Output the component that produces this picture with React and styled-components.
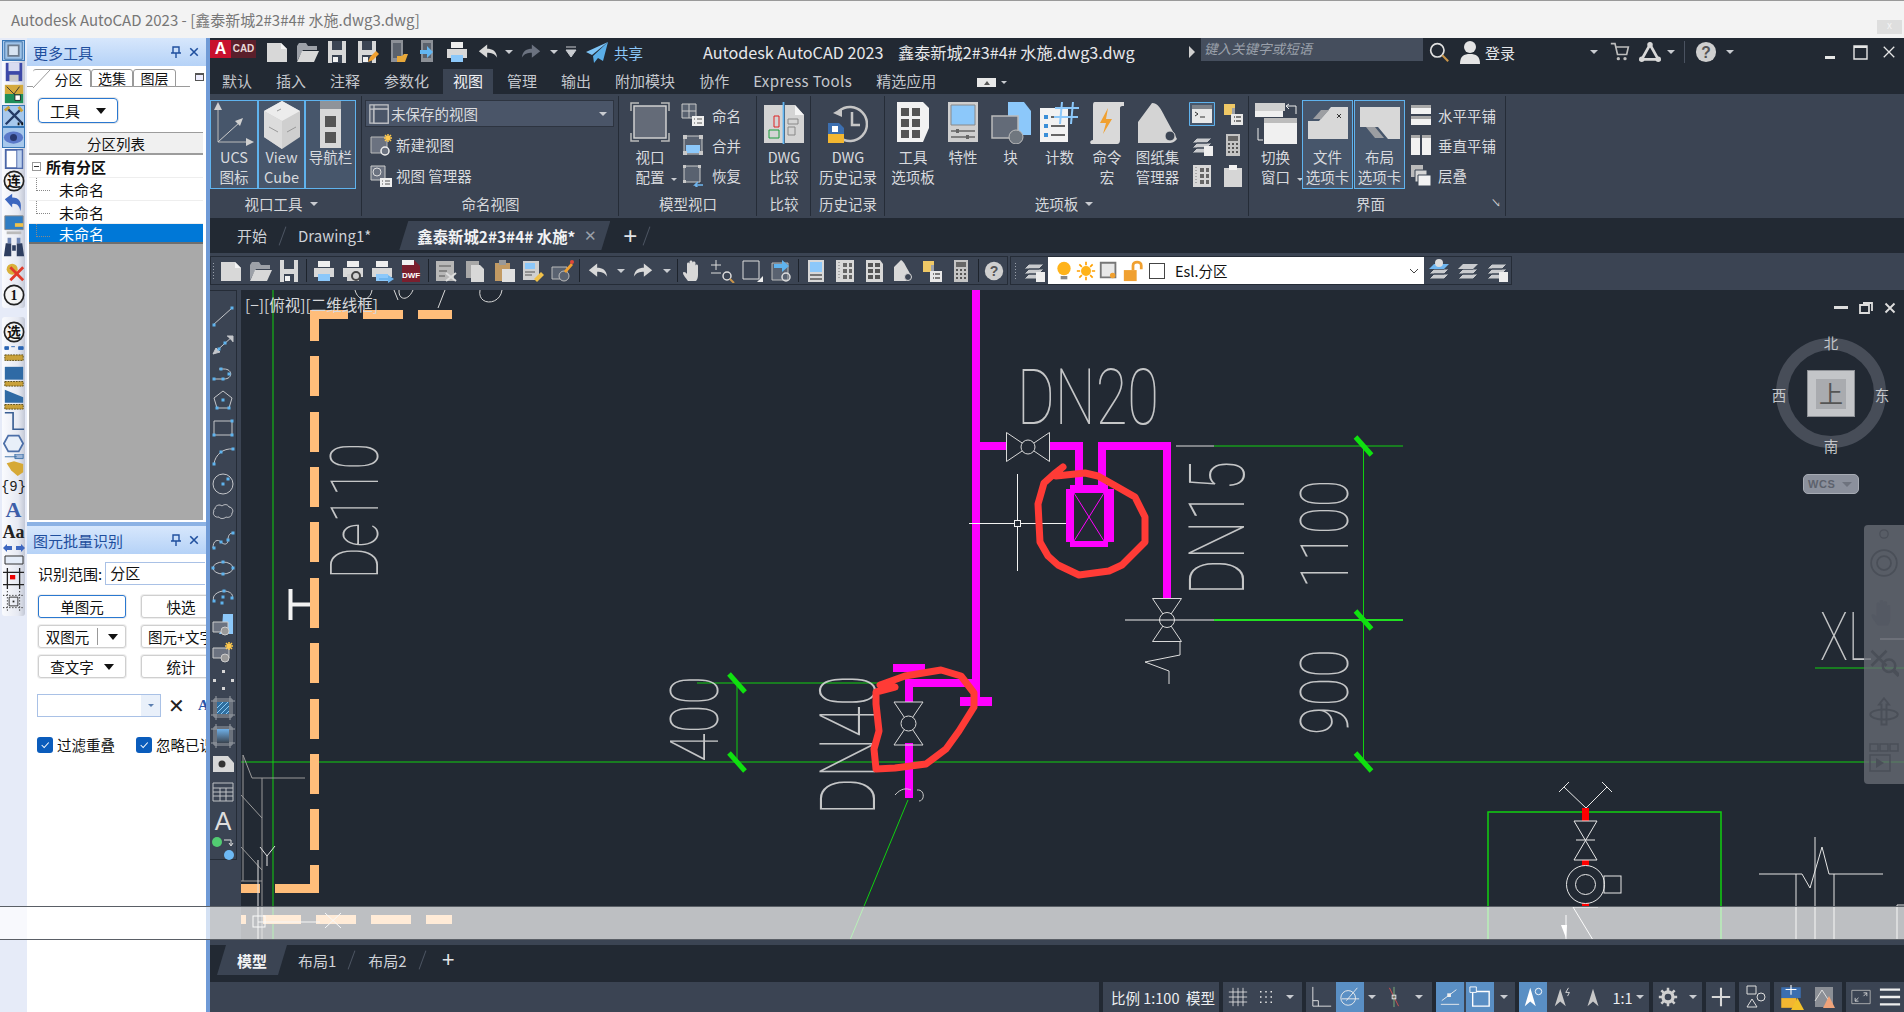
import React from "react";
import styled, { createGlobalStyle } from "styled-components";

const GlobalStyle = createGlobalStyle`
	html, body {
		margin: 0;
		padding: 0;
		overflow: hidden;
		background: #fff;
	}
	* {
		box-sizing: border-box;
	}
	body {
		font-family: "Noto Sans CJK SC", "Liberation Sans", sans-serif;
	}
`;

const dark = "#222933";
const ribbon = "#3b4453";
const fg = "#d9dbdf";
const grey = "#d8d8d8";
const sky = "#8cc8fa";

const Page = styled.div`
	position: relative;
	width: 1904px;
	height: 1012px;
	display: flex;
	flex-direction: column;
	overflow: hidden;
`;

const TitleBar = styled.div`
	height: 38px;
	flex: none;
	display: flex;
	align-items: center;
	background: #f3f3f3;
	border-top: 1px solid #999;
	padding-left: 11px;
	color: #777;
	font-size: 15px;
`;

const GhostClose = styled.div`
	margin-left: auto;
	margin-right: 2px;
	align-self: flex-end;
	width: 25px;
	height: 14px;
	margin-bottom: 4px;
	background: #dedede;
	color: #f4f4f4;
	font-size: 10px;
	line-height: 10px;
	text-align: center;
`;

const Body = styled.div`
	flex: 1;
	display: flex;
	min-height: 0;
`;

/* ---------- left tool strip ---------- */

const Strip = styled.div`
	width: 27px;
	flex: none;
	background: #e6ebf8;
	padding: 2px 2px 0 2px;
	display: flex;
	flex-direction: column;
	gap: 9px;
`;

const StripGroup = styled.div`
	display: flex;
	flex-direction: column;
	align-items: center;
	background: linear-gradient(90deg, #fafbfe, #e6e9f2 70%, #c3c8d6);
	border-radius: 3px;
	padding: ${(p) => p.$pad || "0"};
`;

const StripTool = styled.div`
	height: ${(p) => p.$h || 22}px;
	width: 23px;
	display: flex;
	align-items: center;
	justify-content: center;
	${(p) => p.$on && "background: #a7c8ec; outline: 1px solid #3a79b8; outline-offset: -1px;"}
`;

/* ---------- dockable panels ---------- */

const Docks = styled.div`
	width: 179px;
	flex: none;
	display: flex;
	flex-direction: column;
	background: #fff;
`;

const DockTitle = styled.div`
	height: 28px;
	flex: none;
	display: flex;
	align-items: center;
	padding: 0 7px 0 6px;
	background: linear-gradient(180deg, #d7e7fc, #b5d2f7);
	color: #1f4f9e;
	font-size: 15px;
`;

const DockButtons = styled.div`
	margin-left: auto;
	display: flex;
	gap: 7px;
	align-items: center;
`;

const TreePanel = styled.div`
	height: 484px;
	flex: none;
	display: flex;
	flex-direction: column;
`;

const TabStrip = styled.div`
	height: 21px;
	flex: none;
	display: flex;
	align-items: flex-end;
	padding-left: 6px;
	border-bottom: 1px solid #9a9a9a;
	position: relative;
	margin-right: 16px;
`;

const PaneTab = styled.div`
	height: 18px;
	width: ${(p) => p.$w}px;
	margin-bottom: -1px;
	padding-left: ${(p) => p.$pl || 0}px;
	display: flex;
	align-items: center;
	justify-content: center;
	font-size: 14px;
	line-height: 18px;
	color: #111;
	background: #fff;
	border: 1px solid #9a9a9a;
	border-left-color: #9a9a9a;
	border-radius: 3px 3px 0 0;
	${(p) => p.$on && "border: none; border-right: 1px solid #9a9a9a; border-top: 1px solid #9a9a9a; position: relative;"}
`;

const TabSlant = styled.svg`
	position: absolute;
	left: 0;
	top: 0;
	width: 18px;
	height: 18px;
`;

const Restore = styled.div`
	position: absolute;
	right: -14px;
	top: 7px;
	width: 9px;
	height: 8px;
	border: 1px solid #555;
	border-top-width: 2px;
	background: #eef;
`;

const DropButton = styled.div`
	margin: 11px 0 0 11px;
	width: 80px;
	height: 25px;
	flex: none;
	border: 1px solid #2a78d0;
	border-radius: 4px;
	display: flex;
	align-items: center;
	justify-content: center;
	gap: 16px;
	font-size: 15px;
	color: #111;
	box-shadow: 0 0 0 1px #e4e4e4;
`;

const BlackCaret = styled.span`
	display: inline-block;
	width: 0;
	height: 0;
	border-left: 5px solid transparent;
	border-right: 5px solid transparent;
	border-top: 6px solid #111;
`;

const TreeFrame = styled.div`
	flex: 1;
	margin: 9px 3px 0 2px;
	display: flex;
	flex-direction: column;
	border-bottom: 2px solid #fff;
	min-height: 0;
`;

const TreeHead = styled.div`
	height: 23px;
	flex: none;
	display: flex;
	align-items: center;
	justify-content: center;
	font-size: 14.5px;
	color: #111;
	background: #f0f0f0;
	border: 1px solid #9c9c9c;
	border-width: 1px 0 2px 0;
`;

const TreeRow = styled.div`
	height: ${(p) => p.$h || 23}px;
	flex: none;
	display: flex;
	align-items: center;
	padding-left: ${(p) => (p.$root ? 3 : 30)}px;
	gap: 5px;
	font-size: 15px;
	font-weight: ${(p) => (p.$root ? 700 : 400)};
	color: ${(p) => (p.$sel ? "#fff" : "#111")};
	background: ${(p) => (p.$sel ? "#0078d7" : "#fff")};
	border-bottom: ${(p) => (p.$sel ? "none" : "1px solid #eee")};
	position: relative;
	&::before {
		content: "";
		display: ${(p) => (p.$root ? "none" : "block")};
		position: absolute;
		left: 7px;
		top: 0;
		width: 13px;
		height: 12px;
		border-left: 1px dotted #888;
		border-bottom: 1px dotted #888;
	}
`;

const MinusBox = styled.span`
	width: 9px;
	height: 9px;
	border: 1px solid #999;
	display: inline-flex;
	align-items: center;
	justify-content: center;
	background: #fff;
	&::after {
		content: "";
		width: 5px;
		height: 1px;
		background: #333;
	}
`;

const TreeEmpty = styled.div`
	flex: 1;
	background: #a9a9a9;
	border-top: 2px solid #6e6e6e;
`;

const DockGap = styled.div`
	height: 4px;
	flex: none;
	background: #8cb2e4;
`;

const FormPanel = styled.div`
	flex: 1;
	display: flex;
	flex-direction: column;
	overflow: hidden;
`;

const FieldRow = styled.div`
	display: flex;
	align-items: center;
	margin: 8px 0 0 11px;
	font-size: 15px;
	color: #111;
`;

const FieldInput = styled.div`
	margin-left: 3px;
	width: 100px;
	height: 23px;
	flex: none;
	border: 1px solid #a9c1e6;
	border-right: none;
	padding-left: 4px;
	line-height: 20px;
	font-size: 15px;
`;

const ButtonGrid = styled.div`
	display: grid;
	grid-template-columns: 88px 80px;
	grid-auto-rows: 23px;
	column-gap: 15px;
	row-gap: 7px;
	margin: 10px 0 0 11px;
`;

const FormButton = styled.div`
	border: 1px solid ${(p) => (p.$on ? "#2a78d0" : "#cfcfcf")};
	border-radius: 3px;
	display: flex;
	align-items: center;
	justify-content: center;
	gap: 10px;
	font-size: 14.5px;
	color: #111;
	background: #fff;
	box-shadow: 0 0 0 1px #eee;
	white-space: nowrap;
`;

const SplitLine = styled.span`
	width: 1px;
	height: 17px;
	background: #999;
	margin-left: -2px;
`;

const ComboRow = styled.div`
	display: flex;
	align-items: center;
	margin: 16px 0 0 10px;
`;

const SearchCombo = styled.div`
	width: 124px;
	height: 23px;
	flex: none;
	border: 1px solid #a9c1e6;
	display: flex;
	justify-content: flex-end;
`;

const ComboArrow = styled.div`
	width: 19px;
	background: #e9f0fa;
	display: flex;
	align-items: center;
	justify-content: center;
	&::after {
		content: "";
		border-left: 3px solid transparent;
		border-right: 3px solid transparent;
		border-top: 3px solid #5c7fb0;
	}
`;

const CloseMark = styled.span`
	margin-left: 7px;
	font-size: 20px;
	line-height: 20px;
	color: #222;
	font-family: "Liberation Sans", sans-serif;
`;

const BlueLetter = styled.span`
	margin-left: 13px;
	font-family: "Liberation Serif", serif;
	font-weight: 700;
	font-size: 15px;
	color: #2c55a8;
`;

const CheckRow = styled.div`
	display: flex;
	margin: 17px 0 0 10px;
	gap: 21px;
	white-space: nowrap;
`;

const CheckItem = styled.div`
	display: flex;
	align-items: center;
	gap: 4px;
	font-size: 14.5px;
	color: #111;
`;

const CheckBox = styled.span`
	width: 16px;
	height: 16px;
	border-radius: 3px;
	background: #0a5cbc;
	display: inline-flex;
	align-items: center;
	justify-content: center;
`;

const BlueSplit = styled.div`
	width: 4px;
	flex: none;
	background: #6f9ad6;
`;

/* ---------- AutoCAD window ---------- */

const Cad = styled.div`
	flex: 1;
	min-width: 0;
	display: flex;
	flex-direction: column;
	background: ${dark};
	color: ${fg};
`;

const QuickBar = styled.div`
	height: 28px;
	flex: none;
	display: flex;
	align-items: center;
	font-size: 14px;
`;

const Logo = styled.div`
	width: 46px;
	height: 18px;
	flex: none;
	margin-right: 6px;
	display: flex;
	align-self: flex-start;
	margin-top: 2px;
	font-family: "Liberation Sans", sans-serif;
	font-weight: 700;
`;

const LogoA = styled.span`
	width: 21px;
	background: #c8102e;
	color: #fff;
	font-size: 16px;
	line-height: 18px;
	text-align: center;
`;

const LogoCad = styled.span`
	flex: 1;
	background: #5a1f2b;
	color: #e8d8d8;
	font-size: 10px;
	line-height: 18px;
	text-align: center;
`;

const Slot = styled.div`
	width: ${(p) => p.$w || 30}px;
	height: 26px;
	flex: none;
	display: flex;
	align-items: center;
	justify-content: center;
`;

const ShareText = styled.span`
	color: ${sky};
	margin-left: 1px;
	font-size: 14.5px;
`;

const WindowTitle = styled.div`
	margin-left: 60px;
	font-size: 16.2px;
	white-space: pre;
	color: #e6e7ea;
	width: 480px;
	flex: none;
`;

const SearchBox = styled.div`
	width: 222px;
	height: 23px;
	align-self: flex-start;
	flex: none;
	background: #454e5d;
	color: #9aa0aa;
	font-style: italic;
	font-size: 13.5px;
	padding-left: 3px;
	line-height: 21px;
`;

const Login = styled.div`
	width: 99px;
	flex: none;
	font-size: 15px;
	color: #e4e6e9;
`;

const Upward = styled.div`
	width: 1px;
	height: 22px;
	flex: none;
	background: #4a5260;
	margin: 0 6px;
`;

const MinBar = styled.div`
	width: 10px;
	height: 3px;
	background: #e6e6e6;
	margin: 10px 0 0 76px;
`;

const TabsBar = styled.div`
	height: 28px;
	flex: none;
	display: flex;
	align-items: flex-end;
`;

const RibbonTab = styled.div`
	height: 25px;
	padding: 0 ${(p) => (p.$on ? 10 : 12)}px;
	margin: 0 ${(p) => (p.$on ? 2 : 0)}px;
	font-size: 15px;
	line-height: 23px;
	letter-spacing: ${(p) => (p.$wide ? "0.4px" : "0")};
	color: ${(p) => (p.$on ? "#f0f1f3" : "#c4c7cd")};
	background: ${(p) => (p.$on ? ribbon : "transparent")};
	white-space: nowrap;
`;

const MiniCollapse = styled.div`
	margin: 0 0 7px 29px;
	width: 19px;
	height: 9px;
	background: #e8e8e8;
	display: flex;
	align-items: center;
	justify-content: center;
	&::after {
		content: "";
		border-left: 3px solid transparent;
		border-right: 3px solid transparent;
		border-bottom: 4px solid #555;
	}
`;

const SmallCaret = styled.span`
	display: inline-block;
	width: 0;
	height: 0;
	margin-left: ${(p) => p.$ml || 0}px;
	margin-bottom: ${(p) => p.$mb || 0}px;
	border-left: ${(p) => p.$s || 4}px solid transparent;
	border-right: ${(p) => p.$s || 4}px solid transparent;
	border-top: ${(p) => p.$s || 4}px solid ${(p) => p.$c || "#c9ccd1"};
`;

const Ribbon = styled.div`
	height: 124px;
	flex: none;
	display: flex;
	background: ${ribbon};
`;

const RibbonPanel = styled.div`
	width: ${(p) => p.$w}px;
	flex: none;
	display: flex;
	flex-direction: column;
	position: relative;
	&::after {
		content: "";
		position: absolute;
		right: 0;
		top: 2px;
		bottom: 2px;
		width: 1px;
		background: #252c37;
	}
`;

const PanelBody = styled.div`
	height: 96px;
	flex: none;
	padding-top: 6px;
	display: flex;
`;

const PanelLabel = styled.div`
	flex: 1;
	display: flex;
	align-items: center;
	justify-content: center;
	gap: 7px;
	font-size: 14.5px;
	color: #d6d8dc;
	position: relative;
	padding-bottom: 1px;
	padding-right: ${(p) => p.$pr || 0}px;
`;

const Expander = styled.span`
	position: absolute;
	right: 5px;
	top: 8px;
	color: #ccc;
	font-size: 10px;
	line-height: 10px;
`;

const TallButton = styled.div`
	width: ${(p) => p.$w}px;
	height: 89px;
	flex: none;
	display: flex;
	flex-direction: column;
	align-items: center;
	font-size: 14.5px;
	line-height: 20px;
	color: ${fg};
	text-align: center;
	position: relative;
	margin-right: ${(p) => p.$mr || 0}px;
	${(p) => p.$on && "background: #47566b; border: 1px solid #5fb3ee;"}
`;

const TallIcon = styled.div`
	height: 47px;
	width: 100%;
	flex: none;
	display: flex;
	justify-content: center;
	align-items: flex-start;
	padding-top: ${(p) => p.$pt ?? 2}px;
	margin-top: ${(p) => (p.$on ? -1 : 0)}px;
`;

const CaretPin = styled.span`
	position: absolute;
	right: ${(p) => p.$r ?? 4}px;
	top: 65px;
`;

const RowsColumn = styled.div`
	display: flex;
	flex-direction: column;
	margin-left: ${(p) => p.$ml || 0}px;
	padding-top: ${(p) => p.$pt || 0}px;
`;

const SmallRow = styled.div`
	height: 31px;
	display: flex;
	align-items: center;
	gap: ${(p) => p.$gap || 7}px;
	font-size: 14.5px;
	color: ${fg};
	white-space: nowrap;
`;

const ViewDrop = styled.div`
	width: 249px;
	height: 27px;
	flex: none;
	margin-left: 3px;
	display: flex;
	align-items: center;
	gap: 2px;
	padding: 0 6px 0 3px;
	background: #4a5568;
	border: 1px solid #2d3440;
	font-size: 14.5px;
	color: ${fg};
`;

const DropEnd = styled.span`
	margin-left: auto;
	display: flex;
`;

const MiniGrid = styled.div`
	display: grid;
	grid-template-columns: 36px 26px;
	grid-auto-rows: 31px;
	align-items: center;
	justify-items: center;
	margin-top: -2px;
`;

const DocTabs = styled.div`
	height: 35px;
	flex: none;
	display: flex;
	align-items: center;
	font-size: 15px;
	color: #cfd2d7;
	padding-left: 27px;
`;

const DocSlash = styled.span`
	width: 1px;
	height: 20px;
	background: #4d5563;
	transform: rotate(20deg);
	margin: 0 ${(p) => p.$m || 15}px;
	flex: none;
`;

const DocActive = styled.div`
	width: 211px;
	height: 29px;
	flex: none;
	margin-left: 28px;
	margin-right: 13px;
	background: ${ribbon};
	clip-path: polygon(9px 0, 100% 0, calc(100% - 9px) 100%, 0 100%);
	display: flex;
	align-items: center;
	padding-left: 18px;
	font-weight: 700;
	font-size: 15.4px;
	color: #f1f2f4;
	white-space: nowrap;
`;

const TabClose = styled.span`
	margin-left: 9px;
	font-weight: 400;
	font-size: 15px;
	color: #9aa0a9;
	font-family: "Liberation Sans", sans-serif;
`;

const PlusMark = styled.span`
	font-family: "Liberation Sans", sans-serif;
	font-size: ${(p) => p.$s || 24}px;
	line-height: 20px;
	color: #e2e4e7;
`;

const ToolRow = styled.div`
	height: 37px;
	flex: none;
	display: flex;
	align-items: flex-start;
	padding-top: 3px;
	gap: 2px;
	background: ${ribbon};
`;

const ToolBox = styled.div`
	height: 29px;
	flex: none;
	display: flex;
	align-items: center;
	border: 1px solid #252c37;
`;

const Grip = styled.span`
	width: 3px;
	height: 18px;
	flex: none;
	margin: 0 ${(p) => p.$m ?? 3}px;
	background-image: radial-gradient(#9aa0aa 1px, transparent 1px);
	background-size: 3px 3px;
`;

const ToolSep = styled.span`
	width: 1px;
	height: 23px;
	flex: none;
	background: #1d232c;
	margin: 0 ${(p) => p.$m ?? 2.5}px;
`;

const LayerCombo = styled.div`
	width: 376px;
	height: 27px;
	flex: none;
	background: #fff;
	display: flex;
	align-items: center;
	padding-left: 6px;
	gap: 2px;
	color: #111;
	font-size: 14.5px;
`;

const LayerSwatch = styled.span`
	width: 16px;
	height: 16px;
	margin: 0 8px 0 3px;
	background: #fff;
	border: 1px solid #444;
`;

const Chevron = styled.span`
	margin-left: auto;
	margin-right: 5px;
	display: flex;
`;

const Workspace = styled.div`
	height: 650px;
	flex: none;
	display: flex;
`;

const LeftRail = styled.div`
	width: 31px;
	flex: none;
	background: ${ribbon};
`;

const DrawBar = styled.div`
	width: 27px;
	height: 570px;
	border: 1px solid #252c37;
	border-left: none;
	display: flex;
	flex-direction: column;
	align-items: center;
	padding-top: 11px;
`;

const DrawTool = styled.div`
	height: 28px;
	flex: none;
	display: flex;
	align-items: center;
	justify-content: center;
`;

const Canvas = styled.div`
	flex: 1;
	position: relative;
	overflow: hidden;
	background: ${dark};
`;

const Drawing = styled.svg`
	display: block;
	width: 1663px;
	height: 650px;
`;

const ViewLabel = styled.div`
	position: absolute;
	left: 4px;
	top: 3px;
	font-size: 15.5px;
	color: #d6d8db;
	white-space: nowrap;
`;

const ViewControls = styled.div`
	position: absolute;
	top: 12px;
	right: 8px;
	display: flex;
	gap: 11px;
	align-items: center;
`;

const Cube = styled.div`
	position: absolute;
	left: 1531px;
	top: 48px;
	width: 118px;
	height: 160px;
`;

const CubeRing = styled.div`
	position: absolute;
	left: 4px;
	top: 0;
	width: 110px;
	height: 110px;
	border: 12px solid #474d58;
	border-radius: 50%;
`;

const CubeFace = styled.div`
	position: absolute;
	left: 35px;
	top: 32px;
	width: 48px;
	height: 47px;
	background: #c3c5c8;
	border: 1px solid #8e9196;
	display: flex;
	align-items: center;
	justify-content: center;
`;

const CubeTop = styled.div`
	width: 30px;
	height: 30px;
	background: #a9abaf;
	color: #555;
	font-size: 24px;
	line-height: 28px;
	text-align: center;
`;

const Compass = styled.span`
	position: absolute;
	left: ${(p) => p.$x}px;
	top: ${(p) => p.$y}px;
	width: 16px;
	text-align: center;
	font-size: 14.5px;
	line-height: 16px;
	color: #c4c6ca;
`;

const WcsPill = styled.div`
	position: absolute;
	left: 31px;
	top: 136px;
	width: 56px;
	height: 20px;
	border-radius: 5px;
	background: #8b909c;
	border: 1px solid #a7abb4;
	display: flex;
	align-items: center;
	gap: 7px;
	padding-left: 4px;
	color: #5d626d;
	font-family: "Liberation Sans", sans-serif;
	font-size: 11px;
	font-weight: 700;
	letter-spacing: 0.6px;
`;

const NavBar = styled.div`
	position: absolute;
	right: 0;
	top: 235px;
	width: 40px;
	height: 259px;
	background: rgba(104, 108, 116, 0.78);
	border-radius: 4px 0 0 4px;
	display: flex;
	flex-direction: column;
	align-items: center;
	padding-top: 2px;
`;

const NavSlot = styled.div`
	height: ${(p) => p.$h}px;
	flex: none;
	display: flex;
	align-items: center;
	justify-content: center;
`;

const LightStrip = styled.div`
	height: 5px;
	flex: none;
	background: ${ribbon};
`;

const LayoutBar = styled.div`
	height: 37px;
	flex: none;
	display: flex;
	padding: 0 0 7px 7px;
	align-items: stretch;
	font-size: 15px;
	color: #cfd2d7;
`;

const LayoutActive = styled.div`
	width: 70px;
	flex: none;
	background: ${ribbon};
	clip-path: polygon(9px 0, 100% 0, calc(100% - 9px) 100%, 0 100%);
	display: flex;
	align-items: center;
	justify-content: center;
	font-weight: 700;
	color: #f1f2f4;
`;

const LayoutTab = styled.div`
	display: flex;
	align-items: center;
	margin-left: ${(p) => p.$ml}px;
	white-space: nowrap;
`;

const LayoutSlash = styled(DocSlash)`
	align-self: center;
`;

const StatusBar = styled.div`
	height: 30px;
	flex: none;
	display: flex;
	gap: 4px;
	font-size: 14.5px;
`;

const StatusGroup = styled.div`
	width: ${(p) => p.$w}px;
	flex: ${(p) => (p.$w ? "none" : "1")};
	background: ${ribbon};
	display: flex;
	align-items: center;
	padding-left: ${(p) => p.$pl || 0}px;
	white-space: nowrap;
	color: #eceef1;
`;

const StatusSlot = styled.div`
	width: ${(p) => p.$w || 28}px;
	height: 100%;
	flex: none;
	display: flex;
	align-items: center;
	justify-content: center;
	margin-right: ${(p) => p.$mr || 0}px;
	background: ${(p) => (p.$on ? "#5a8fc4" : "transparent")};
`;

const Band = styled.div`
	position: absolute;
	left: 0;
	right: 0;
	top: 906px;
	height: 34px;
	background: rgba(255, 255, 255, 0.7);
	border-top: 1px solid #5a5f66;
	border-bottom: 1px solid #5a5f66;
	pointer-events: none;
`;

/* ---------- small pictures ---------- */

const Svg = ({ s = 24, w, h, vb = "0 0 24 24", children }) => (
	<svg width={w || s} height={h || s} viewBox={vb} style={{ display: "block", flex: "none" }}>
		{children}
	</svg>
);

const Floppy = ({ pen }) => (
	<Svg>
		<path d="M3 1h18v22H3z" fill={grey} />
		<path d="M7 1h10v9H7zM7 15h10v8H7z" fill={ribbon} />
		<path d="M8 17h5v5H8z" fill="#f2f2f2" />
		{pen && <path d="M13 22l2-5 6-6 3 3-6 6z" fill="#f0a030" />}
	</Svg>
);

const NewDoc = () => (
	<Svg>
		<path d="M2 3h14l6 6v13H2z" fill={grey} />
		<path d="M16 3l6 6h-6z" fill="#f4f4f4" />
	</Svg>
);

const OpenDoc = () => (
	<Svg>
		<path d="M2 21V6l2-3h7l2 3h9v4H8z" fill="#9da1a8" />
		<path d="M7 11h17l-5 11H2z" fill={grey} />
	</Svg>
);

const Printer = ({ arrow, glass }) => (
	<Svg>
		<path d="M6 2h12v6H6z" fill="#eee" />
		<path d="M2 9h20v9H2z" fill={grey} />
		<path d="M6 15h12v7H6z" fill={glass ? "#cfcfcf" : sky} />
		{arrow && <path d="M9 19h9v-3l6 4-6 4v-3H9z" fill="#6fb6f0" />}
		{glass && <circle cx="15" cy="17" r="4" fill="none" stroke="#444" strokeWidth="2" />}
	</Svg>
);

const Phone = ({ doc, share }) => (
	<Svg>
		<path d="M6 0h12v22H6z" fill="#8c9097" />
		<path d="M8 3h8v15H8z" fill="#5b626d" />
		{doc && <path d="M12 16h5l2-2h4l-3 8h-8z" fill="#e8a83a" />}
		{share && <path d="M5 10h7V6l6 6-6 6v-4H5z" fill="#63b6f2" />}
	</Svg>
);

const Undo = ({ c = grey }) => (
	<Svg w={24} h={20}>
		<path d="M1 11l10-8v5c6 0 11 2 12 11-3-5-7-6-12-6v6z" fill={c} />
	</Svg>
);

const Redo = ({ c = grey }) => (
	<Svg w={24} h={20}>
		<path d="M23 11L13 3v5C7 8 2 10 1 19c3-5 7-6 12-6v6z" fill={c} />
	</Svg>
);

const Send = () => (
	<Svg>
		<path d="M23 2L1 12l6 3z" fill="#7ec4f6" />
		<path d="M23 2L8 16l1 7 4-5 5 3z" fill="#5aaee8" />
	</Svg>
);

const Cross = ({ s = 16, c = "#fff", sw = 2 }) => (
	<Svg s={s} vb="0 0 16 16">
		<path d="M2 2l12 12M14 2L2 14" stroke={c} strokeWidth={sw} fill="none" />
	</Svg>
);

const Pin = ({ c = "#1f4f9e" }) => (
	<Svg s={12} vb="0 0 12 12">
		<path d="M3 1h6v6H3zM1 7h10M6 7v5" stroke={c} strokeWidth="1.4" fill="none" />
	</Svg>
);

const HandIcon = ({ c = grey, s = 24 }) => (
	<Svg s={s}>
		<path
			d="M7 22c-2-3-5-6-5-8 0-2 3-1 4 1V5c0-2 2.500-2 2.500 0v5V3c0-2 3-2 3 0v7V4c0-2 3-2 3 0v7-4c0-2 2.500-2 2.500 0v9c0 3-1 5-2 6z"
			fill={c}
		/>
	</Svg>
);

const PropsCard = () => (
	<Svg>
		<path d="M4 1h16v22H4z" fill={grey} />
		<path d="M6 3h12v10H6z" fill={sky} />
		<path d="M6 16h12M6 20h12" stroke="#555" strokeWidth="1.500" />
	</Svg>
);

const PaletteCard = ({ big }) => (
	<Svg>
		<path d="M4 1h14l3 4v18H4z" fill={big ? "#efefef" : grey} />
		<path d="M6 4h5v4H6zM13 4h5v4h-5zM6 10h5v4H6zM13 10h5v4h-5zM6 16h5v4H6zM13 16h5v4h-5z" fill="#555" />
	</Svg>
);

const DotGridCard = () => (
	<Svg>
		<path d="M3 1h18v22H3z" fill={grey} />
		<path d="M10 4h4v4h-4zM16 4h3v4h-3zM10 10h4v4h-4zM16 10h3v4h-3zM10 16h4v4h-4zM16 16h3v4h-3z" fill="#666" />
		<path d="M6 3v18" stroke="#777" strokeDasharray="1 2" />
	</Svg>
);

const SheetRoll = () => (
	<Svg>
		<path d="M3 22V8L10 1c3 1 6 9 10 15-1 4-4 6-6 6z" fill={grey} />
		<circle cx="17" cy="18" r="3.500" fill={ribbon} stroke={grey} />
	</Svg>
);

const LayerNotes = () => (
	<Svg>
		<path d="M3 2h11v11H3z" fill="#efc866" />
		<path d="M10 12h12v11H10z" fill="#e8e8e8" />
		<path d="M11 6h3v6h-3z" fill="#9da1a8" />
		<path d="M13 15h1M13 19h1M15 15h5M15 19h5" stroke="#555" strokeWidth="1.500" />
	</Svg>
);

const Calculator = () => (
	<Svg>
		<path d="M5 1h14v22H5z" fill="#c4c4c4" />
		<path d="M7 3h10v5H7z" fill="#666" />
		<path d="M7 10h2v2H7zM11 10h2v2h-2zM15 10h2v2h-2zM7 14h2v2H7zM11 14h2v2h-2zM15 14h2v2h-2zM7 18h2v2H7zM11 18h2v2h-2zM15 18h2v2h-2z" fill="#555" />
	</Svg>
);

const HelpDisc = ({ s = 20 }) => (
	<Svg s={s}>
		<circle cx="12" cy="12" r="11" fill="#cfcfcf" />
		<text x="12" y="18" textAnchor="middle" fontFamily="Liberation Sans" fontWeight="700" fontSize="17" fill="#555">
			?
		</text>
	</Svg>
);

const LayerStack = ({ top, badge, person }) => (
	<Svg>
		<path d="M2 20l5-5h15l-5 5zM2 15l5-5h15l-5 5zM2 10l5-5h15l-5 5z" fill="#c9cbce" stroke={ribbon} />
		{top && <path d="M2 10l5-5h15l-5 5z" fill={top} />}
		{person && <circle cx="12" cy="4" r="4" fill="#ddd" />}
		{badge && <path d="M14 13h9v10h-9z" fill="#eee" />}
	</Svg>
);

const Bulb = () => (
	<Svg s={20}>
		<circle cx="12" cy="9" r="8" fill="#ffb31a" />
		<path d="M8 18h8v4H8z" fill="#888" />
	</Svg>
);

const Sun = () => (
	<Svg s={20}>
		<circle cx="12" cy="12" r="6" fill="#ffb31a" />
		<path d="M12 1v4M12 19v4M1 12h4M19 12h4M4 4l3 3M17 17l3 3M20 4l-3 3M7 17l-3 3" stroke="#ffa000" strokeWidth="2" />
	</Svg>
);

const FreezeFrame = () => (
	<Svg s={22}>
		<path d="M3 3h16v16H3z" fill="#e8e8e8" stroke="#777" strokeWidth="2" />
		<circle cx="16" cy="17" r="3" fill="#f0a030" />
	</Svg>
);

const Padlock = () => (
	<Svg s={22}>
		<path d="M2 11h14v12H2z" fill="#f0a030" />
		<path d="M12 11V6c0-5 9-5 9 0v4" fill="none" stroke="#f0a030" strokeWidth="3" />
	</Svg>
);

const dots = (pts) => pts.map(([x, y], i) => <rect key={i} x={x - 1.5} y={y - 1.5} width="3" height="3" fill="#5fb3ee" />);

const draw = {
	line: <path d="M2 21L21 4" stroke="#c4c6ca" fill="none" />,
	xline: <path d="M2 22L22 4M16 4h6v6M2 22l7-2-4-4z" stroke="#c4c6ca" fill="#c4c6ca" />,
	pline: <path d="M2 19h11c9 0 9-10 0-10H8" stroke="#c4c6ca" fill="none" />,
	polygon: <path d="M12 3l9 7-3 10H6L3 10z" stroke="#c4c6ca" fill="none" />,
	rect: <path d="M3 5h18v14H3z" stroke="#c4c6ca" fill="none" />,
	arc: <path d="M3 20C4 11 12 4 22 5" stroke="#c4c6ca" fill="none" />,
	circle: <circle cx="12" cy="12" r="10" stroke="#c4c6ca" fill="none" />,
	cloud: (
		<path
			d="M4 9c0-4 5-5 7-3 2-2 6-2 7 1 3 0 5 4 3 6 0 4-4 5-6 4-2 2-6 2-7 0-4 1-7-3-5-6-1-1 0-2 1-2z"
			stroke="#c4c6ca"
			fill="none"
		/>
	),
	spline: <path d="M2 20c0-8 5-9 8-6s7 3 7-2 2-7 5-7" stroke="#c4c6ca" fill="none" />,
	ellipse: <ellipse cx="12" cy="12" rx="10" ry="6" stroke="#c4c6ca" fill="none" />,
	earc: <path d="M3 17C0 11 8 7 13 7s10 3 8 7" stroke="#c4c6ca" fill="none" />,
	insert: (
		<>
			<path d="M12 2h10v20H8l3-6z" fill={sky} />
			<path d="M2 10h15v10H2z" fill="#6b7280" stroke="#ccc" />
			<circle cx="14" cy="19" r="4" fill="#999" stroke="#ccc" />
		</>
	),
	block: (
		<>
			<path d="M2 8h16v10H2z" fill="#6b7280" stroke="#ccc" />
			<circle cx="14" cy="18" r="4" fill="#999" stroke="#ccc" />
			<path d="M18 2v8M14 6h8M15 3l6 6M21 3l-6 6" stroke="#ffc94d" strokeWidth="1.500" />
		</>
	),
	point: <path d="M11 2h3v3h-3zM2 11h3v3H2zM20 11h3v3h-3zM11 19h3v3h-3z" fill="#d6d6d6" />,
	hatch: (
		<>
			<path d="M3 3h18v18H3zM0 5h24M0 19h24M5 0v24M19 0v24" stroke="#9ca0a7" fill="none" />
			<path d="M6 6h12v12H6z" fill="#2f6e9f" />
			<path d="M6 12l6-6M6 17l11-11M10 18l8-8M15 18l3-3" stroke="#8ccaf5" />
		</>
	),
	gradient: (
		<>
			<path d="M3 3h18v18H3zM0 5h24M0 19h24M5 0v24M19 0v24" stroke="#9ca0a7" fill="none" />
			<path d="M6 5h12v14H6z" fill="url(#gradTool)" />
		</>
	),
	region: (
		<>
			<path d="M2 4h15l6 7v9H2z" fill="#d8d8d8" />
			<circle cx="11" cy="12" r="3.500" fill="#333" />
		</>
	),
	table: <path d="M2 3h20v18H2zM2 8h20M2 12h20M2 16h20M9 8v13M15 8v13" stroke="#bfc1c5" fill="none" />,
	mtext: (
		<text x="12" y="22" textAnchor="middle" fontFamily="Liberation Sans" fontSize="25" fill="#dedede">
			A
		</text>
	),
	add: (
		<>
			<circle cx="6" cy="6" r="5" fill="#52cc72" />
			<circle cx="18" cy="19" r="5" fill="#6db9f4" />
			<path d="M13 4h7v5M18 7l2 3 2-3" stroke="#ddd" fill="none" />
		</>
	),
};

const drawList = [
	["line", [[3, 21], [21, 4]]],
	["xline", [[8, 17], [14, 11]]],
	["pline", [[3, 19], [12, 19], [10, 9], [18, 14]]],
	["polygon", [[12, 12], [6, 20], [18, 20]]],
	["rect", [[21, 19], [3, 19], [21, 5]]],
	["arc", [[3, 20], [10, 8], [22, 5]]],
	["circle", [[12, 12], [17, 7]]],
	["cloud", []],
	["spline", [[3, 20], [10, 14], [17, 12], [22, 5]]],
	["ellipse", [[2, 12], [12, 6], [22, 12], [12, 18]]],
	["earc", [[3, 17], [13, 7], [21, 14], [12, 13], [11, 19]]],
	["insert", []],
	["block", []],
	["point", []],
	["hatch", []],
	["gradient", []],
	["region", []],
	["table", []],
	["mtext", []],
	["add", []],
];

const stripIcons = {
	view: (
		<Svg s={21}>
			<path d="M2 2h20v20H2z" fill="#9fc3e8" stroke="#3a6ea5" />
			<path d="M6 6h12v12H6z" fill="#d7e4f2" stroke="#6b7b8d" strokeWidth="2" />
		</Svg>
	),
	save: (
		<Svg s={22}>
			<path d="M3 2h18v20H3z" fill="#3d49a8" />
			<path d="M6 2h12v9H6z" fill="#d8dcf0" />
			<path d="M7 15h10v7H7z" fill="#c8c8c8" />
		</Svg>
	),
	layers: (
		<Svg s={22}>
			<path d="M2 2h20v10H2z" fill="#d4a93c" />
			<path d="M2 12h20v10H2z" fill="#1f8f5a" />
			<path d="M4 4l14 14M18 4l-6 8" stroke="#333" />
			<path d="M13 13h6v6h-6z" fill="#fff" stroke="#222" />
		</Svg>
	),
	tools: (
		<Svg s={22}>
			<path d="M3 21L19 5M5 4l16 16" stroke="#243a66" strokeWidth="2.500" />
			<path d="M2 6l5-4M17 2l4 5" stroke="#c9a13a" strokeWidth="3" />
			<path d="M16 22h2v-3h-2zM20 22h2v-3h-2z" fill="#111" />
		</Svg>
	),
	eye: (
		<Svg s={21}>
			<ellipse cx="12" cy="12" rx="11" ry="7" fill="#5b79c9" />
			<circle cx="12" cy="12" r="4" fill="#28386e" />
		</Svg>
	),
	doc: (
		<Svg s={22}>
			<path d="M3 2h18v20H3z" fill="#fff" stroke="#4a66a8" strokeWidth="2" />
			<path d="M15 2h6v20h-6z" fill="#bcd0ee" stroke="#4a66a8" />
		</Svg>
	),
	undo: (
		<Svg s={22}>
			<path d="M2 8l8-6v4c8 0 11 5 9 15-1-6-4-9-9-8v4z" fill="#3d67c0" />
		</Svg>
	),
	monitor: (
		<Svg s={22}>
			<path d="M2 2h20v15H2z" fill="#2f7dc4" stroke="#888" />
			<path d="M4 19h16v3H4z" fill="#bbb" />
			<path d="M13 10h9v4h-9z" fill="#f0c14a" />
		</Svg>
	),
	binoc: (
		<Svg s={22}>
			<path d="M3 8h6v14H1zM15 8h6l2 14h-8zM10 10h4v6h-4z" fill="#2e3e60" />
			<path d="M5 2h4v6H5zM15 2h4v6h-4z" fill="#6f86b5" />
		</Svg>
	),
	xgear: (
		<Svg s={22}>
			<circle cx="10" cy="10" r="6" fill="#d9b13b" />
			<path d="M8 8l14 14M22 8L8 22" stroke="#e03a2a" strokeWidth="3" />
		</Svg>
	),
	ruler1: (
		<Svg s={22} vb="0 0 24 20">
			<path d="M2 2h4v3H2zM9 2h4M17 2h5v3h-5z" fill="#2b66b5" stroke="#2b66b5" />
			<path d="M2 11h20v6H2z" fill="#c9a13a" stroke="#5b4a12" strokeDasharray="2 1" />
		</Svg>
	),
	ruler2: (
		<Svg w={22} h={24}>
			<path d="M2 2h20v14H2z" fill="#2f6aa5" />
			<path d="M2 18h20v5H2z" fill="#c9a13a" stroke="#5b4a12" strokeDasharray="2 1" />
		</Svg>
	),
	ruler3: (
		<Svg w={22} h={24}>
			<path d="M2 2l20 8v6H2z" fill="#2f6aa5" />
			<path d="M2 18h20v5H2z" fill="#c9a13a" stroke="#5b4a12" strokeDasharray="2 1" />
		</Svg>
	),
	step: (
		<Svg s={22}>
			<path d="M2 3h9v18h12" stroke="#3a5f94" strokeWidth="1.800" fill="none" />
		</Svg>
	),
	hexa: (
		<Svg s={21}>
			<path d="M6 3h12l5 9-5 9H6l-5-9z" fill="#e8eff9" stroke="#4c6fa8" strokeWidth="2" />
		</Svg>
	),
	hand: (
		<Svg s={22}>
			<path d="M2 3h13M13 0h9v5h-9z" stroke="#3a6ea5" fill="#9eb6d8" />
			<path d="M4 10l8-2 10 3v9l-6 4-7-6z" fill="#d6a937" />
		</Svg>
	),
	crop: (
		<Svg s={21}>
			<path d="M5 0v24M19 0v24M0 5h24M0 19h24" stroke="#222" strokeWidth="1.500" />
			<path d="M8 8h6v5H8z" fill="#e00" />
		</Svg>
	),
	dotBox: (
		<Svg s={21}>
			<path d="M5 0v24M19 0v24M0 5h24M0 19h24" stroke="#222" strokeDasharray="1.500 2" />
			<path d="M7 7h10v10H7z" fill="none" stroke="#222" />
			<rect x="11" y="11" width="2" height="2" fill="#222" />
		</Svg>
	),
};

const Ring = ({ t, c = "#111" }) => (
	<Svg s={22}>
		<circle cx="12" cy="12" r="10.500" fill="#f4f4f4" stroke="#222" strokeWidth="1.800" />
		<text x="12" y="17.500" textAnchor="middle" fontSize="15" fontWeight="700" fill={c} fontFamily="Liberation Serif, Noto Sans CJK SC">
			{t}
		</text>
	</Svg>
);

const StripLetter = styled.span`
	font-family: "Liberation Serif", serif;
	font-weight: 700;
	font-size: ${(p) => p.$s}px;
	line-height: 18px;
	color: ${(p) => p.$c};
`;

const BraceNine = styled.span`
	font-family: "Liberation Mono", monospace;
	font-size: 14px;
	color: #222;
`;

/* ---------- ribbon artwork ---------- */

const UcsIcon = () => (
	<Svg w={40} h={44} vb="0 0 40 44">
		<path d="M4 4v36h32" stroke="#bbb" fill="none" />
		<path d="M4 0l-4 8h8zM40 40l-8-4v8z" fill="#d0d0d0" />
		<path d="M4 40l22-20" stroke="#ccc" fill="none" />
		<path d="M29 16l-8 3 5 5z" fill="#d0d0d0" />
	</Svg>
);

const CubeIcon = () => (
	<Svg w={38} h={48} vb="0 0 38 48">
		<path d="M19 0l18 10v26L19 48 1 36V10z" fill="#cfcfcf" />
		<path d="M19 0l18 10-18 10L1 10z" fill="#ececec" />
		<path d="M19 20v28L1 36V10z" fill="#dcdcdc" />
		<path d="M6 26l9 5M24 31l9-5M14 10l4-2" stroke="#999" />
	</Svg>
);

const NavIcon = () => (
	<Svg w={21} h={48} vb="0 0 21 48">
		<path d="M0 0h21v47H0z" fill="#d8d8d8" />
		<path d="M0 0h21v8H0z" fill="#8f9399" />
		<path d="M5 15h11v11H5zM5 31h11v11H5z" fill="#555" />
	</Svg>
);

const ViewFrames = () => (
	<Svg s={20}>
		<path d="M1 1h22v22H1zM6 1v22M1 6h22" fill="#5a6373" stroke="#c2c4c8" strokeWidth="1.500" />
		<path d="M6 6h17v17H6z" fill="#4a5568" stroke="#c2c4c8" strokeWidth="1.500" />
	</Svg>
);

const NewViewIcon = () => (
	<Svg>
		<path d="M2 4h16v16H2z" fill="#6b7280" stroke="#bbb" />
		<circle cx="16" cy="18" r="4" fill="#6b7280" stroke="#eee" strokeWidth="1.500" />
		<path d="M19 1v8M15 5h8M16 2l6 6M22 2l-6 6" stroke="#ffc94d" strokeWidth="1.500" />
	</Svg>
);

const ViewMgrIcon = () => (
	<Svg>
		<path d="M2 2h14v14H2z" fill="#6b7280" stroke="#ccc" />
		<circle cx="8" cy="8" r="4" fill="none" stroke="#ddd" />
		<path d="M11 14h12v9H11z" fill="#efefef" />
		<path d="M13 17h1M13 20h1M16 17h5M16 20h5" stroke="#555" />
	</Svg>
);

const ViewportBig = () => (
	<Svg s={40} vb="0 0 40 40">
		<path d="M1 9V1h8M31 1h8v8M39 31v8h-8M9 39H1v-8" stroke="#bbb" fill="none" strokeWidth="1.500" />
		<path d="M4 4h32v32H4z" fill="#646b78" stroke="#d0d0d0" strokeWidth="1.500" />
	</Svg>
);

const ViewportName = () => (
	<Svg>
		<path d="M1 1h14v14H1zM8 1v14M1 8h14" fill="#596270" stroke="#c9c9c9" />
		<path d="M11 13h12v10H11z" fill="#efefef" />
		<path d="M13 16h1M13 20h1M16 16h5M16 20h5" stroke="#555" />
	</Svg>
);

const ViewportJoin = () => (
	<Svg>
		<path d="M3 3h18v18H3z" fill="#596270" stroke="#c9c9c9" />
		<path d="M5 12h14v8H5z" fill={sky} />
		<path d="M2 2h4v4H2zM18 2h4v4h-4zM2 18h4v4H2zM18 18h4v4h-4z" fill="#c9c9c9" />
	</Svg>
);

const ViewportRestore = () => (
	<Svg>
		<path d="M3 3h16v16H3z" fill="#596270" stroke="#c9c9c9" />
		<path d="M2 2h3v3H2zM17 2h3v3h-3zM2 17h3v3H2z" fill="#c9c9c9" />
		<path d="M22 22h-8l3-3m-3 3l3 3" stroke="#6fb6f0" strokeWidth="1.600" fill="none" />
	</Svg>
);

const CompareIcon = () => (
	<Svg w={40} h={42} vb="0 0 40 42">
		<path d="M0 3h19v38H0z" fill="#d4d4d4" />
		<path d="M21 3h10l9 10v28H21z" fill="#d4d4d4" />
		<path d="M31 3l9 10h-9z" fill="#f4f4f4" />
		<path d="M10 14h5v11h-5z" fill="none" stroke="#d22" />
		<path d="M5 28h10v8H5z" fill="none" stroke="#1a9c3a" />
		<path d="M24 17h10v5H24zM24 25h7v8h-7z" fill="none" stroke="#888" />
		<path d="M19.500 0v42" stroke="#63b6f2" strokeWidth="1.800" />
	</Svg>
);

const HistoryIcon = () => (
	<Svg w={40} h={42} vb="0 0 40 42">
		<path d="M11 9a17 17 0 1 1 0 26" fill="none" stroke="#c6c6c6" strokeWidth="2.500" />
		<path d="M5 11l9-5v9z" fill="#c6c6c6" />
		<path d="M24 10v13h8" stroke="#c6c6c6" strokeWidth="2.500" fill="none" />
		<path d="M0 21h11l5 5v15H0z" fill="#3c6fb0" />
		<path d="M0 32h16v9H0z" fill="#f3b731" />
		<path d="M4 24h6v6H4z" fill="#fff" />
	</Svg>
);

const BigPalette = () => (
	<Svg w={32} h={40} vb="0 0 32 40">
		<path d="M0 0h26l6 6v20l-6 14H0z" fill="#f2f2f2" />
		<path d="M4 6h8v8H4zM15 6h8v8h-8zM4 17h8v8H4zM15 17h8v8h-8zM4 28h8v8H4zM15 28h8v8h-8z" fill="#555" />
	</Svg>
);

const BigProps = () => (
	<Svg w={30} h={40} vb="0 0 30 40">
		<path d="M0 0h30v40H0z" fill="#cfcfcf" />
		<path d="M3 3h24v20H3z" fill={sky} stroke="#888" />
		<path d="M3 29h24M3 35h24" stroke="#666" strokeWidth="1.300" />
		<path d="M8 27h3v4H8zM18 33h3v4h-3z" fill="#666" />
	</Svg>
);

const BigBlock = () => (
	<Svg w={40} h={42} vb="0 0 40 42">
		<path d="M17 0h16l7 9v24H17z" fill={sky} />
		<path d="M1 14h26v22H1z" fill="#636b78" stroke="#bbb" strokeWidth="1.500" />
		<circle cx="25" cy="35" r="7" fill="#70777f" stroke="#bbb" />
	</Svg>
);

const BigCount = () => (
	<Svg w={40} h={40} vb="0 0 40 40">
		<path d="M0 6h28v34H0z" fill="#f2f2f2" />
		<path d="M4 13h4v4H4zM4 22h4v4H4zM4 31h4v4H4z" fill="#3a8fd8" />
		<path d="M11 15h14M11 24h14M11 33h14" stroke="#666" strokeWidth="2" />
		<path d="M22 0l-2 22M33 0l-2 22M15 6h24M14 15h24" stroke={sky} strokeWidth="2" fill="none" />
	</Svg>
);

const BigMacro = () => (
	<Svg w={34} h={42} vb="0 0 34 42">
		<path d="M5 0h29v4c-3 0-4 0-4 3v29c0 4 0 6-4 6H2c-3 0-2-4 1-4V4c0-2 0-4 2-4z" fill="#d9d9d9" />
		<path d="M18 6l-8 15h6l-3 11 9-15h-6z" fill="#f0a030" />
	</Svg>
);

const BigSheet = () => (
	<Svg w={40} h={42} vb="0 0 40 42">
		<path d="M0 41V20L14 1c6 0 9 6 13 14l12 22c-3 4-6 4-9 4z" fill="#d4d4d4" />
		<circle cx="32" cy="34" r="5" fill={ribbon} stroke="#d4d4d4" />
	</Svg>
);

const ConsoleIcon = () => (
	<Svg w={26} h={24} vb="0 0 26 24">
		<path d="M.5.5h25v23H.5z" fill="#47566b" stroke="#5fb3ee" />
		<path d="M3 3h20v18H3z" fill="#e8e8e8" />
		<path d="M3 3h20v4H3z" fill="#7d828a" />
		<path d="M6 10l3 2-3 2M11 15h5" stroke="#333" fill="none" />
	</Svg>
);

const SwitchWindow = () => (
	<Svg w={42} h={44} vb="0 0 42 44">
		<path d="M0 1h30v8H0z" fill="#cfcfcf" />
		<path d="M0 9h28v6H0z" fill="#f0f0f0" />
		<path d="M9 16h33v26H9z" fill="#f0f0f0" />
		<path d="M9 16h33v5H9z" fill="#bcbcbc" />
		<path d="M32 4h9v8M31 4l3-2M31 4l3 3M3 26v12h5" stroke="#eee" fill="none" />
	</Svg>
);

const FileTabsIcon = () => (
	<Svg w={40} h={32} vb="0 0 40 32">
		<path d="M0 32V14h11l12-14h17v32z" fill="#d8d8d8" />
		<path d="M5 12l8-9h8l-8 9z" fill="#9c9ea2" />
		<path d="M29 7l4 4M33 7l-4 4" stroke="#333" />
	</Svg>
);

const LayoutTabsIcon = () => (
	<Svg w={40} h={32} vb="0 0 40 32">
		<path d="M0 0h40v32H28L18 20H0z" fill="#d8d8d8" />
		<path d="M6 20h9l9 11h-9z" fill="#9c9ea2" />
	</Svg>
);

const TileH = () => (
	<Svg w={20} h={22} vb="0 0 20 22">
		<path d="M0 1h20v9H0zM0 12h20v9H0z" fill="#f2f2f2" />
		<path d="M0 1h20v3H0zM0 12h20v3H0z" fill="#a8a8a8" />
	</Svg>
);

const TileV = () => (
	<Svg w={20} h={22} vb="0 0 20 22">
		<path d="M0 1h9v20H0zM11 1h9v20h-9z" fill="#f2f2f2" />
		<path d="M0 1h9v3H0zM11 1h9v3h-9z" fill="#a8a8a8" />
	</Svg>
);

const Cascade = () => (
	<Svg w={20} h={22} vb="0 0 20 22">
		<path d="M0 1h12v12H0z" fill="#bbb" />
		<path d="M4 6h12v12H4z" fill="#d5d5d5" stroke={ribbon} />
		<path d="M7 11h13v11H7z" fill="#f2f2f2" stroke={ribbon} />
	</Svg>
);

const Search = () => (
	<Svg s={20}>
		<circle cx="10" cy="10" r="8" fill="none" stroke="#e0e0e0" strokeWidth="2" />
		<path d="M16 16l7 7" stroke="#c9954a" strokeWidth="2.500" />
	</Svg>
);

const User = () => (
	<Svg s={24}>
		<circle cx="12" cy="7" r="6" fill="#e4e4e4" />
		<path d="M2 24c0-8 4-10 10-10s10 2 10 10z" fill="#e4e4e4" />
	</Svg>
);

const Cart = () => (
	<Svg s={20}>
		<path d="M1 2h5l3 13h11l2-9H7" stroke="#bdbdbd" strokeWidth="2" fill="none" />
		<circle cx="10" cy="20" r="2" fill="#bdbdbd" />
		<circle cx="18" cy="20" r="2" fill="#bdbdbd" />
	</Svg>
);

const Triad = () => (
	<Svg s={22}>
		<path d="M12 4L3 20h18z" fill="none" stroke="#d8d8d8" strokeWidth="3" />
		<circle cx="12" cy="4" r="3" fill="#d8d8d8" />
		<circle cx="3" cy="20" r="3" fill="#d8d8d8" />
		<circle cx="21" cy="20" r="3" fill="#d8d8d8" />
	</Svg>
);

const WinBox = () => (
	<Svg w={15} h={15} vb="0 0 15 15">
		<path d="M1 1h13v13H1z" fill="none" stroke="#e6e6e6" strokeWidth="1.400" />
		<path d="M1 2h13" stroke="#e6e6e6" strokeWidth="2" />
	</Svg>
);

const Tick = ({ x, y }) => <path d={`M${x - 8} ${y - 9}L${x + 8} ${y + 9}`} stroke="#10e010" strokeWidth="5" />;

/* ---------- the drawing ---------- */

const CadText = ({ x, y, len, size, rot, children }) => (
	<text
		transform={`translate(${x} ${y})${rot ? " rotate(-90)" : ""}`}
		textLength={len}
		lengthAdjust="spacingAndGlyphs"
		fontFamily="Roboto, Inter, sans-serif"
		fontWeight="100"
		fontSize={size}
		fill="#e2e2e2"
		fillOpacity="0.85"
	>
		{children}
	</text>
);

const magenta = "#ff00ff";
const peach = "#ffbd7a";
const green = "#10d010";

const Valve = ({ x, y, w, h, r = 7, rot }) => (
	<g transform={`translate(${x} ${y})${rot ? " rotate(90)" : ""}`} fill="none" stroke="#d8d8d8">
		<path d={`M${-w / 2} ${-h / 2}L${w / 2} ${h / 2}V${-h / 2}L${-w / 2} ${h / 2}Z`} />
		<circle r={r} fill={dark} />
	</g>
);

const roughPath = (pts) => "M" + pts.map((p) => p.join(" ")).join("L");

const redOne = [
	[1063, 467], [1054, 474], [1044, 483], [1038, 504], [1040, 542], [1048, 556], [1058, 565], [1079, 575], [1109, 571],
	[1122, 565], [1130, 557], [1145, 542], [1145, 517], [1135, 497], [1114, 485], [1098, 476], [1085, 473], [1056, 476],
];

const redTwo = [
	[880, 685], [905, 676], [941, 670], [961, 676], [974, 693], [974, 707], [959, 731], [946, 749], [926, 764], [895, 768],
	[876, 769], [874, 749], [879, 731], [876, 704], [876, 692], [895, 687],
];

const vDashes = [[315, 26], [356, 40], [412, 40], [467, 40], [522, 40], [578, 50], [643, 40], [699, 40], [754, 40], [809, 41], [865, 28]];
const hTop = [[310, 38], [363, 40], [418, 34]];
const hBottom = [[241, 19], [275, 44]];
const hBand = [[241, 5], [263, 38], [316, 40], [371, 40], [426, 26]];

const pipes = [
	[972, 290, 8, 415],
	[960, 697, 32, 9],
	[972, 442, 34, 8],
	[1049, 442, 34, 8],
	[1075, 442, 8, 43],
	[1098, 442, 73, 8],
	[1098, 442, 8, 43],
	[1163, 442, 8, 157],
	[905, 679, 75, 8],
	[905, 679, 8, 23],
	[905, 743, 8, 55],
	[893, 664, 32, 8],
];

const CadDrawing = () => (
	<Drawing viewBox="241 290 1663 650">
		{/* green layer */}
		<path d="M273 290V940M241 762H1904M737 683V762M697 683H880M1363.500 446V762M1214 446H1403" stroke={green} fill="none" />
		<path d="M1214 620H1403" stroke="#22e022" strokeWidth="2" />
		<path d="M1176 446H1214" stroke="#ddd" />
		<path d="M908 800L850 940" stroke={green} fill="none" />
		<path d="M1815 668H1904" stroke={green} />
		<path d="M1488 940V812H1721V940" stroke="#10d010" strokeWidth="1.500" fill="none" />

		{/* peach dashed pipe */}
		{vDashes.map(([y, h], i) => <rect key={i} x="310" y={y} width="9" height={h} fill={peach} />)}
		{hTop.map(([x, w], i) => <rect key={i} x={x} y="310" width={w} height="9" fill={peach} />)}
		{hBottom.map(([x, w], i) => <rect key={i} x={x} y="884" width={w} height="9" fill={peach} />)}
		{hBand.map(([x, w], i) => <rect key={i} x={x} y="915" width={w} height="9" fill={peach} />)}
		<path d="M290.500 589V620M290.500 604.500H310" stroke="#f2f2f2" strokeWidth="4" fill="none" />

		{/* faint text cut off at the top of the view */}
		<path d="M372 290c-2 12-14 12-17 0M394 290l4 10M399 290c-1 10 9 12 14 0M445 290l-7 18M480 290c-3 16 20 16 22 0" stroke="#d8d8d8" fill="none" />

		{/* fixtures, lower left */}
		<path d="M243 755V881M243 755L252 778H305M262 778V940M241 795L262 818M241 847L262 870M241 881H262" stroke="#9a9a9a" fill="none" />
		<path d="M258 860V940M258 922H320M260 847L267 856L275 846M267 856V866" stroke="#e4e4e4" fill="none" />
		<rect x="253" y="916" width="12" height="11" fill="none" stroke="#f0f0f0" />
		<path d="M325 913L341 928M341 913L325 928" stroke="#e8e8e8" />

		{/* magenta pipes */}
		{pipes.map(([x, y, w, h], i) => <rect key={i} x={x} y={y} width={w} height={h} fill={magenta} />)}
		<path d="M1070 485h38v4h6v53h-6v5h-38v-5h-4v-53h4zM1074 493v48h30v-48z" fill={magenta} fillRule="evenodd" />
		<path d="M1074 493L1104 541M1104 493L1074 541" stroke={magenta} />

		{/* valves */}
		<Valve x={1028} y={447} w={43} h={29} />
		<Valve x={1167} y={620} w={43} h={29} r={7.500} rot />
		<Valve x={908.500} y={723.500} w={43} h={29} r={7.500} rot />
		<path d="M1180 642V655L1145 662L1169 671V684" stroke="#ddd" fill="none" />
		<path d="M1125 620H1214" stroke="#eee" />
		<path d="M895 795c6-7 12-7 16-5M917 790c8-1 8 11 2 11" stroke="#ccc" fill="none" />

		{/* crosshair */}
		<path d="M969 523.500H1014M1021 523.500H1066M1017.500 474V520M1017.500 527V571" stroke="#f2f2f2" />
		<rect x="1014.500" y="520.500" width="6" height="6" fill="none" stroke="#f2f2f2" />

		{/* dimensions */}
		<Tick x={1363.500} y={446} />
		<Tick x={1363.500} y={620} />
		<Tick x={1363.500} y={762} />
		<Tick x={737} y={683} />
		<Tick x={737} y={762} />

		<CadText x={1017} y={424} len={142} size={78}>DN20</CadText>
		<CadText x={1244} y={595} len={134} size={78} rot>DN15</CadText>
		<CadText x={1348} y={588} len={108} size={67} rot>1100</CadText>
		<CadText x={1348} y={735} len={86} size={67} rot>900</CadText>
		<CadText x={718} y={762} len={86} size={67} rot>400</CadText>
		<CadText x={875} y={815} len={140} size={78} rot>DN40</CadText>
		<CadText x={378} y={579} len={136} size={66} rot>De110</CadText>
		<CadText x={1820} y={660} len={52} size={66}>XL</CadText>
		<path d="M1880 639H1904" stroke="#ddd" />

		{/* pump */}
		<path d="M1564 787L1586 808L1607 787M1559 792L1569 782M1602 782L1612 792" stroke="#e8e8e8" fill="none" />
		<rect x="1582" y="808" width="7" height="13" fill="#ff0000" />
		<rect x="1582" y="860" width="7" height="6" fill="#ff0000" />
		<rect x="1582" y="902" width="7" height="5" fill="#ff0000" />
		<path d="M1574 821H1597L1574 860H1597ZM1576 840H1595" stroke="#e8e8e8" fill="none" />
		<circle cx="1585.500" cy="884.500" r="19" fill={dark} stroke="#e8e8e8" />
		<circle cx="1585.500" cy="884.500" r="10" fill="none" stroke="#e8e8e8" />
		<rect x="1604" y="876" width="17" height="17" fill="none" stroke="#e8e8e8" />
		<path d="M1573 907L1593 940M1573 907H1598M1566 915V940" stroke="#f4f4f4" fill="none" />
		<path d="M1561 925L1566 938L1567 925z" fill="#fff" />

		{/* riser on the right */}
		<path d="M1759 874H1802L1810 888L1822 847L1829 874H1883M1796 874V940M1815 837V940M1834 874V940M1897 905V940M1897 905H1904" stroke="#e4e4e4" fill="none" />

		{/* hand drawn rings */}
		<path d={roughPath(redOne)} stroke="#ff3b36" strokeWidth="7" fill="none" strokeLinejoin="round" strokeLinecap="round" />
		<path d={roughPath(redTwo)} stroke="#ff3b36" strokeWidth="7" fill="none" strokeLinejoin="round" strokeLinecap="round" />
	</Drawing>
);

const Caret = (p) => <SmallCaret {...p} />;

const Stat = ({ on, w, mr, children }) => (
	<StatusSlot $on={on} $w={w} $mr={mr}>
		{children}
	</StatusSlot>
);

const Tick2 = () => (
	<Svg s={10}>
		<path d="M4 12l6 6L21 6" stroke="#fff" strokeWidth="2.500" fill="none" />
	</Svg>
);

const App = () => {
	const qatIcons = [<NewDoc />, <OpenDoc />, <Floppy />, <Floppy pen />, <Phone doc />, <Phone share />, <Printer />];
	const tabs = ["默认", "插入", "注释", "参数化", "视图", "管理", "输出", "附加模块", "协作", "Express Tools", "精选应用"];
	return (
		<Page>
			<GlobalStyle />
			<svg width="0" height="0" style={{ position: "absolute" }}>
				<defs>
					<linearGradient id="gradTool" x1="0" x2="0" y1="0" y2="1">
						<stop offset="0" stopColor="#6fb0e8" />
						<stop offset="1" stopColor="#3a4450" />
					</linearGradient>
				</defs>
			</svg>
			<TitleBar>
				Autodesk AutoCAD 2023 - [鑫泰新城2#3#4# 水施.dwg3.dwg]
				<GhostClose>x</GhostClose>
			</TitleBar>
			<Body>
				<Strip>
					<StripGroup $pad="0 0 3px">
						<StripTool $h={21} $on>{stripIcons.view}</StripTool>
						<StripTool>{stripIcons.save}</StripTool>
						<StripTool>{stripIcons.layers}</StripTool>
						<StripTool $on>{stripIcons.tools}</StripTool>
						<StripTool $h={21} $on>{stripIcons.eye}</StripTool>
						<StripTool>{stripIcons.doc}</StripTool>
						<StripTool><Ring t="连" /></StripTool>
						<StripTool $h={21}>{stripIcons.undo}</StripTool>
						<StripTool $h={23}>{stripIcons.monitor}</StripTool>
						<StripTool>{stripIcons.binoc}</StripTool>
						<StripTool $h={26}>{stripIcons.xgear}</StripTool>
						<StripTool $h={21}><Ring t="1" /></StripTool>
					</StripGroup>
					<StripGroup $pad="3px 0 4px">
						<StripTool $h={24}><Ring t="选" /></StripTool>
						<StripTool $h={20}>{stripIcons.ruler1}</StripTool>
						<StripTool $h={24}>{stripIcons.ruler2}</StripTool>
						<StripTool $h={22}>{stripIcons.ruler3}</StripTool>
						<StripTool $h={22}>{stripIcons.step}</StripTool>
						<StripTool $h={22}>{stripIcons.hexa}</StripTool>
						<StripTool $h={22}>{stripIcons.hand}</StripTool>
						<StripTool $h={22}><BraceNine>{"{9}"}</BraceNine></StripTool>
						<StripTool $h={23}><StripLetter $s={22} $c="#3d5ea8">A</StripLetter></StripTool>
						<StripTool $h={21}><StripLetter $s={18} $c="#222">Aa</StripLetter></StripTool>
						<StripTool $h={12}><Svg w={22} h={8} vb="0 0 22 8"><path d="M0 4l4-4v2h5v4H4v2zM22 4l-4-4v2h-5v4h5v2z" fill="#3d67c0" /></Svg></StripTool>
						<StripTool $h={12}><Svg w={20} h={10} vb="0 0 20 10"><path d="M1 1h18v8H1z" fill="#e4ecf8" stroke="#333" /></Svg></StripTool>
						<StripTool $h={24}>{stripIcons.crop}</StripTool>
						<StripTool $h={22}>{stripIcons.dotBox}</StripTool>
					</StripGroup>
				</Strip>
				<Docks>
					<TreePanel>
						<DockTitle>
							更多工具
							<DockButtons>
								<Pin />
								<Cross s={10} c="#1f4f9e" sw={2.500} />
							</DockButtons>
						</DockTitle>
						<TabStrip>
							<PaneTab $w={58} $pl={14} $on>
								<TabSlant viewBox="0 0 18 18"><path d="M0 18L17 0" stroke="#9a9a9a" fill="none" /></TabSlant>
								分区
							</PaneTab>
							<PaneTab $w={42}>选集</PaneTab>
							<PaneTab $w={43}>图层</PaneTab>
							<Restore />
						</TabStrip>
						<DropButton>
							工具
							<BlackCaret />
						</DropButton>
						<TreeFrame>
							<TreeHead>分区列表</TreeHead>
							<TreeRow $root>
								<MinusBox />
								所有分区
							</TreeRow>
							<TreeRow>未命名</TreeRow>
							<TreeRow>未命名</TreeRow>
							<TreeRow $sel $h={18}>未命名</TreeRow>
							<TreeEmpty />
						</TreeFrame>
					</TreePanel>
					<DockGap />
					<FormPanel>
						<DockTitle>
							图元批量识别
							<DockButtons>
								<Pin />
								<Cross s={10} c="#1f4f9e" sw={2.500} />
							</DockButtons>
						</DockTitle>
						<FieldRow>
							识别范围:
							<FieldInput>分区</FieldInput>
						</FieldRow>
						<ButtonGrid>
							<FormButton $on>单图元</FormButton>
							<FormButton>快选</FormButton>
							<FormButton>
								双图元
								<SplitLine />
								<BlackCaret />
							</FormButton>
							<FormButton>图元+文字</FormButton>
							<FormButton>
								查文字
								<BlackCaret />
							</FormButton>
							<FormButton>统计</FormButton>
						</ButtonGrid>
						<ComboRow>
							<SearchCombo>
								<ComboArrow />
							</SearchCombo>
							<CloseMark>✕</CloseMark>
							<BlueLetter>A</BlueLetter>
						</ComboRow>
						<CheckRow>
							<CheckItem>
								<CheckBox><Tick2 /></CheckBox>
								过滤重叠
							</CheckItem>
							<CheckItem>
								<CheckBox><Tick2 /></CheckBox>
								忽略已识别
							</CheckItem>
						</CheckRow>
					</FormPanel>
				</Docks>
				<BlueSplit />
				<Cad>
					<QuickBar>
						<Logo>
							<LogoA>A</LogoA>
							<LogoCad>CAD</LogoCad>
						</Logo>
						{qatIcons.map((icon, i) => (
							<Slot key={i}>{icon}</Slot>
						))}
						<Slot $w={31}><Undo /></Slot>
						<Slot $w={12}><Caret /></Slot>
						<Slot $w={32}><Redo c="#6b7280" /></Slot>
						<Slot $w={14}><Caret /></Slot>
						<Slot $w={20}><Svg w={12} h={12} vb="0 0 12 12"><path d="M1 1h10M1 4l5 7 5-7z" stroke="#c9ccd1" fill="#c9ccd1" /></Svg></Slot>
						<Slot $w={32}><Send /></Slot>
						<ShareText>共享</ShareText>
						<WindowTitle>{"Autodesk AutoCAD 2023    鑫泰新城2#3#4# 水施.dwg3.dwg"}</WindowTitle>
						<Slot $w={18}><Svg w={8} h={12} vb="0 0 8 12"><path d="M1 0l6 6-6 6z" fill="#d0d0d0" /></Svg></Slot>
						<SearchBox>键入关键字或短语</SearchBox>
						<Slot $w={32}><Search /></Slot>
						<Slot $w={30}><User /></Slot>
						<Login>登录</Login>
						<Slot $w={20}><Caret /></Slot>
						<Slot $w={32}><Cart /></Slot>
						<Slot $w={28}><Triad /></Slot>
						<Slot $w={14}><Caret /></Slot>
						<Upward />
						<Slot $w={30}><HelpDisc s={22} /></Slot>
						<Slot $w={18}><Caret /></Slot>
						<Slot $w={105}><MinBar /></Slot>
						<Slot $w={32}><WinBox /></Slot>
						<Slot $w={26}><Cross s={14} c="#e6e6e6" sw={1.500} /></Slot>
					</QuickBar>
					<TabsBar>
						{tabs.map((t) => (
							<RibbonTab key={t} $on={t === "视图"} $wide={t === "Express Tools"}>{t}</RibbonTab>
						))}
						<MiniCollapse />
						<Caret $ml={5} $s={3} $mb={10} />
					</TabsBar>
					<Ribbon>
						<RibbonPanel $w={152}>
							<PanelBody>
								<TallButton $w={48} $on>
									<TallIcon $on><UcsIcon /></TallIcon>
									UCS<br />图标
								</TallButton>
								<TallButton $w={47} $on>
									<TallIcon $on $pt={1}><CubeIcon /></TallIcon>
									View<br />Cube
								</TallButton>
								<TallButton $w={51} $on>
									<TallIcon $on $pt={1}><NavIcon /></TallIcon>
									导航栏
								</TallButton>
							</PanelBody>
							<PanelLabel $pr={10}>视口工具<Caret $s={4} /></PanelLabel>
						</RibbonPanel>
						<RibbonPanel $w={257}>
							<PanelBody>
								<RowsColumn>
									<ViewDrop>
										<ViewFrames />
										未保存的视图
										<DropEnd><Caret /></DropEnd>
									</ViewDrop>
									<RowsColumn $ml={7} $pt={2}>
										<SmallRow $gap={3}><NewViewIcon />新建视图</SmallRow>
										<SmallRow $gap={3}><ViewMgrIcon />视图 管理器</SmallRow>
									</RowsColumn>
								</RowsColumn>
							</PanelBody>
							<PanelLabel>命名视图</PanelLabel>
						</RibbonPanel>
						<RibbonPanel $w={138}>
							<PanelBody>
								<TallButton $w={62}>
									<TallIcon $pt={2}><ViewportBig /></TallIcon>
									视口<br />配置
									<CaretPin><Caret $s={3} /></CaretPin>
								</TallButton>
								<RowsColumn>
									<SmallRow><ViewportName />命名</SmallRow>
									<SmallRow><ViewportJoin />合并</SmallRow>
									<SmallRow><ViewportRestore />恢复</SmallRow>
								</RowsColumn>
							</PanelBody>
							<PanelLabel>模型视口</PanelLabel>
						</RibbonPanel>
						<RibbonPanel $w={54}>
							<PanelBody>
								<TallButton $w={54}>
									<TallIcon><CompareIcon /></TallIcon>
									DWG<br />比较
								</TallButton>
							</PanelBody>
							<PanelLabel>比较</PanelLabel>
						</RibbonPanel>
						<RibbonPanel $w={74}>
							<PanelBody>
								<TallButton $w={74}>
									<TallIcon><HistoryIcon /></TallIcon>
									DWG<br />历史记录
								</TallButton>
							</PanelBody>
							<PanelLabel>历史记录</PanelLabel>
						</RibbonPanel>
						<RibbonPanel $w={364}>
							<PanelBody>
								<TallButton $w={56}>
									<TallIcon><BigPalette /></TallIcon>
									工具<br />选项板
								</TallButton>
								<TallButton $w={44}>
									<TallIcon><BigProps /></TallIcon>
									特性
								</TallButton>
								<TallButton $w={51}>
									<TallIcon><BigBlock /></TallIcon>
									块
								</TallButton>
								<TallButton $w={47}>
									<TallIcon><BigCount /></TallIcon>
									计数
								</TallButton>
								<TallButton $w={48}>
									<TallIcon><BigMacro /></TallIcon>
									命令<br />宏
								</TallButton>
								<TallButton $w={53}>
									<TallIcon><BigSheet /></TallIcon>
									图纸集<br />管理器
								</TallButton>
								<MiniGrid>
									<ConsoleIcon />
									<LayerNotes />
									<LayerStack badge />
									<Calculator />
									<DotGridCard />
									<Svg><path d="M3 4h18v19H3z" fill="#d6d6d6" /><path d="M8 1h8v5H8z" fill="#f2f2f2" /></Svg>
								</MiniGrid>
							</PanelBody>
							<PanelLabel $pr={6}>选项板<Caret /></PanelLabel>
						</RibbonPanel>
						<RibbonPanel $w={257}>
							<PanelBody>
								<TallButton $w={53}>
									<TallIcon $pt={2}><SwitchWindow /></TallIcon>
									切换<br />窗口
									<CaretPin $r={-1}><Caret $s={3} /></CaretPin>
								</TallButton>
								<TallButton $w={51} $mr={1} $on>
									<TallIcon $on $pt={7}><FileTabsIcon /></TallIcon>
									文件<br />选项卡
								</TallButton>
								<TallButton $w={51} $on>
									<TallIcon $on $pt={7}><LayoutTabsIcon /></TallIcon>
									布局<br />选项卡
								</TallButton>
								<RowsColumn $ml={6}>
									<SmallRow><TileH />水平平铺</SmallRow>
									<SmallRow><TileV />垂直平铺</SmallRow>
									<SmallRow><Cascade />层叠</SmallRow>
								</RowsColumn>
							</PanelBody>
							<PanelLabel $pr={14}>
								界面
								<Expander>↘</Expander>
							</PanelLabel>
						</RibbonPanel>
					</Ribbon>
					<DocTabs>
						开始
						<DocSlash />
						Drawing1*
						<DocActive>
							鑫泰新城2#3#4# 水施*
							<TabClose>✕</TabClose>
						</DocActive>
						<PlusMark>+</PlusMark>
						<DocSlash $m={9} />
					</DocTabs>
					<ToolRow>
						<ToolBox>
							<Grip $m={1} />
							<Slot $w={29}><NewDoc /></Slot>
							<Slot $w={29}><OpenDoc /></Slot>
							<Slot $w={29}><Floppy /></Slot>
							<ToolSep />
							<Slot $w={29}><Printer /></Slot>
							<Slot $w={29}><Printer glass /></Slot>
							<Slot $w={29}><Printer arrow /></Slot>
							<Slot $w={29}>
								<Svg><path d="M3 1h12l6 6v16H3z" fill="#7a1f2e" /><path d="M3 1h12v5H3z" fill="#f2f2f2" /><text x="12" y="19" textAnchor="middle" fontSize="8" fontFamily="Liberation Sans" fontWeight="700" fill="#fff">DWF</text></Svg>
							</Slot>
							<ToolSep />
							<Slot $w={29}>
								<Svg><path d="M2 2h18v20H2z" fill="#b8b8b8" /><path d="M5 7h12M5 12h8M5 17h6" stroke="#555" /><path d="M12 14l10 8M22 14l-10 8" stroke="#ddd" strokeWidth="2" /></Svg>
							</Slot>
							<Slot $w={29}>
								<Svg><path d="M3 2h13v17H3z" fill="#a8a8a8" /><path d="M8 6h9l4 4v13H8z" fill="#d8d8d8" /></Svg>
							</Slot>
							<Slot $w={29}>
								<Svg><path d="M3 4h15v18H3z" fill="#c29a63" /><path d="M7 1h7v5H7z" fill="#999" /><path d="M10 10h13v13H10z" fill="#e0e0e0" /></Svg>
							</Slot>
							<Slot $w={29}>
								<Svg><path d="M2 2h16v19H2z" fill="#d0d0d0" /><path d="M4 4h10v6H4z" fill={sky} /><path d="M4 13h10M4 16h7" stroke="#555" /><path d="M13 20l7-7 3 3-7 7z" fill="#f0c14a" /></Svg>
							</Slot>
							<Slot $w={29}>
								<Svg><path d="M2 8h15v12H2z" fill="#596270" stroke="#bbb" /><circle cx="14" cy="17" r="5" fill="#596270" stroke="#bbb" /><path d="M14 12l7-8 2 2-7 8z" fill="#f0a030" /><circle cx="22" cy="3" r="2" fill="#e0473a" /></Svg>
							</Slot>
							<ToolSep $m={3} />
							<Slot $w={30}><Undo /></Slot>
							<Slot $w={16}><Caret /></Slot>
							<Slot $w={28}><Redo /></Slot>
							<Slot $w={20}><Caret /></Slot>
							<ToolSep $m={0} />
							<Slot $w={30}><HandIcon /></Slot>
							<Slot $w={30}>
								<Svg><path d="M5 1v10M0 6h10M0 14h10" stroke="#ddd" fill="none" /><circle cx="16" cy="17" r="4" fill="none" stroke="#ddd" strokeWidth="1.500" /><path d="M19 20l4 4" stroke="#c9954a" strokeWidth="2" /></Svg>
							</Slot>
							<Slot $w={28}>
								<Svg><path d="M3 2h16v18H3z" fill="none" stroke="#ddd" /><path d="M23 17v6h-6z" fill="#eee" /></Svg>
							</Slot>
							<Slot $w={29}>
								<Svg><path d="M3 4h16v17H3z" fill="#596270" stroke="#bbb" /><path d="M5 5h8V1l7 6-7 6V9H5z" fill="#5fb3ee" /><circle cx="17" cy="18" r="4" fill="none" stroke="#ddd" strokeWidth="1.500" /></Svg>
							</Slot>
							<ToolSep />
							<Slot $w={29}><PropsCard /></Slot>
							<Slot $w={29}><DotGridCard /></Slot>
							<Slot $w={29}><PaletteCard /></Slot>
							<Slot $w={29}><SheetRoll /></Slot>
							<Slot $w={29}><LayerNotes /></Slot>
							<Slot $w={29}><Calculator /></Slot>
							<ToolSep />
							<Slot $w={26}><HelpDisc /></Slot>
						</ToolBox>
						<ToolBox>
							<Grip />
							<Slot $w={28}><LayerStack badge /></Slot>
							<LayerCombo>
								<Bulb />
								<Sun />
								<FreezeFrame />
								<Padlock />
								<LayerSwatch />
								Esl.分区
								<Chevron>
									<Svg s={10} vb="0 0 10 10"><path d="M1 3l4 4 4-4" stroke="#444" fill="none" /></Svg>
								</Chevron>
							</LayerCombo>
							<Slot $w={29}><LayerStack top="#6fb6f0" person /></Slot>
							<Slot $w={29}><LayerStack top="#c9cbce" /></Slot>
							<Slot $w={29}><LayerStack badge /></Slot>
						</ToolBox>
					</ToolRow>
					<Workspace>
						<LeftRail>
							<DrawBar>
								{drawList.map(([name, pts]) => (
									<DrawTool key={name}>
										<Svg>
											{draw[name]}
											{dots(pts)}
										</Svg>
									</DrawTool>
								))}
							</DrawBar>
						</LeftRail>
						<Canvas>
							<CadDrawing />
							<ViewLabel>[−][俯视][二维线框]</ViewLabel>
							<ViewControls>
								<Svg w={14} h={4} vb="0 0 14 4"><path d="M0 0h14v3H0z" fill="#ddd" /></Svg>
								<Svg w={14} h={12} vb="0 0 14 12"><path d="M1 3h9v8H1zM4 1h9v8" fill="none" stroke="#ddd" strokeWidth="1.800" /></Svg>
								<Cross s={12} c="#ddd" sw={2.500} />
							</ViewControls>
							<Cube>
								<CubeRing />
								<CubeFace>
									<CubeTop>上</CubeTop>
								</CubeFace>
								<Compass $x={51} $y={-3}>北</Compass>
								<Compass $x={51} $y={100}>南</Compass>
								<Compass $x={-1} $y={49}>西</Compass>
								<Compass $x={102} $y={49}>东</Compass>
								<WcsPill>WCS<Caret $s={5} $c="#6e737e" /></WcsPill>
							</Cube>
							<NavBar>
								<NavSlot $h={14}><Svg s={10}><circle cx="12" cy="12" r="10" fill="none" stroke="#4a4f58" strokeWidth="3" /></Svg></NavSlot>
								<NavSlot $h={43}>
									<Svg s={28}><circle cx="12" cy="12" r="11" fill="none" stroke="#4a4f58" strokeWidth="1.500" /><circle cx="12" cy="12" r="6" fill="none" stroke="#4a4f58" strokeWidth="1.500" /></Svg>
								</NavSlot>
								<NavSlot $h={58}><HandIcon c="#545963" s={30} /></NavSlot>
								<NavSlot $h={40}>
									<Svg s={30}><path d="M2 3l12 12M14 3L2 15" stroke="#4a4f58" strokeWidth="2" /><circle cx="16" cy="15" r="5" fill="none" stroke="#4a4f58" strokeWidth="2" /><path d="M20 19l4 4" stroke="#4a4f58" strokeWidth="3" /></Svg>
								</NavSlot>
								<NavSlot $h={60}>
									<Svg s={30}><path d="M12 1l4 5h-2v16h-4V6H8z" fill="none" stroke="#4a4f58" strokeWidth="1.500" /><ellipse cx="12" cy="14" rx="11" ry="4" fill="none" stroke="#4a4f58" strokeWidth="1.500" /></Svg>
								</NavSlot>
								<NavSlot $h={34}>
									<Svg w={30} h={32} vb="0 0 30 32"><path d="M1 1h8v7H1zM11 1h8v7h-8zM21 1h8v7h-8zM1 12h20v16H1z" fill="none" stroke="#4a4f58" strokeWidth="1.500" /><path d="M7 15l8 5-8 5z" fill="#4a4f58" /></Svg>
								</NavSlot>
							</NavBar>
						</Canvas>
					</Workspace>
					<LightStrip />
					<LayoutBar>
						<LayoutActive>模型</LayoutActive>
						<LayoutTab $ml={11}>布局1</LayoutTab>
						<LayoutSlash $m={15} />
						<LayoutTab $ml={1}>布局2</LayoutTab>
						<LayoutSlash $m={15} />
						<LayoutTab $ml={4}><PlusMark $s={22}>+</PlusMark></LayoutTab>
					</LayoutBar>
					<StatusBar>
						<StatusGroup />
						<StatusGroup $w={116} $pl={8}>比例 1:100&nbsp;&nbsp;模型</StatusGroup>
						<StatusGroup $w={79} $pl={1}>
							<Stat>
								<Svg s={20}><path d="M6 1v22M12 1v22M18 1v22M1 6h22M1 12h22M1 18h22" stroke="#e6e6e6" fill="none" /></Svg>
							</Stat>
							<Stat>
								<Svg s={18}><path d="M4 4h2v2H4zM11 4h2v2h-2zM18 4h2v2h-2zM4 11h2v2H4zM11 11h2v2h-2zM18 11h2v2h-2zM4 18h2v2H4zM11 18h2v2h-2zM18 18h2v2h-2z" fill="#e6e6e6" /></Svg>
							</Stat>
							<Stat w={20}><Caret /></Stat>
						</StatusGroup>
						<StatusGroup $w={126} $pl={2}>
							<Stat>
								<Svg s={22}><path d="M2 1v21h20M2 16h6v6" stroke="#e6e6e6" fill="none" /></Svg>
							</Stat>
							<Stat on>
								<Svg s={22}><circle cx="10" cy="13" r="8" fill="none" stroke="#eee" /><path d="M3 14h19M8 16L20 2" stroke="#eee" /></Svg>
							</Stat>
							<Stat w={16}><Caret /></Stat>
							<Stat>
								<Svg s={22}><path d="M7 2l10 20" stroke="#d85050" /><path d="M12 1v22" stroke="#7fb67f" /><rect x="10" y="10" width="4" height="4" fill="none" stroke="#eee" /></Svg>
							</Stat>
							<Stat w={22}><Caret /></Stat>
						</StatusGroup>
						<StatusGroup $w={79}>
							<Stat on mr={2}>
								<Svg s={22}><path d="M2 20h20M3 16L19 4" stroke="#eee" fill="none" /><rect x="9" y="8" width="4" height="4" fill="#eee" /></Svg>
							</Stat>
							<Stat on>
								<Svg s={22}><path d="M4 6h18v16H4z" fill="none" stroke="#fff" strokeWidth="1.500" /><path d="M1 1h7v6H1z" fill="#5a8fc4" stroke="#fff" /></Svg>
							</Stat>
							<Stat w={20}><Caret /></Stat>
						</StatusGroup>
						<StatusGroup $w={130}>
							<Stat on>
								<Svg s={22}><path d="M9 2l6 20-6-5-6 5z" fill="#fff" /><circle cx="18" cy="6" r="3.500" fill="none" stroke="#fff" /></Svg>
							</Stat>
							<Stat w={31}>
								<Svg s={22}><path d="M9 3l6 19-6-5-6 5z" fill="#c8c8c8" /><path d="M18 2l-3 5h4l-2 4" stroke="#ddd" fill="none" /></Svg>
							</Stat>
							<Stat w={29}>
								<Svg s={22}><path d="M12 3l6 19-6-5-6 5z" fill="#c8c8c8" /></Svg>
							</Stat>
							<StatusSlot $w={42}>1:1<Caret $ml={3} /></StatusSlot>
						</StatusGroup>
						<StatusGroup $w={49}>
							<Stat w={30}>
								<Svg s={20}><circle cx="12" cy="12" r="6" fill="none" stroke="#cfcfcf" strokeWidth="4" /><path d="M12 1v5M12 18v5M1 12h5M18 12h5M4 4l3 3M17 17l3 3M20 4l-3 3M7 17l-3 3" stroke="#cfcfcf" strokeWidth="3" /></Svg>
							</Stat>
							<Stat w={19}><Caret /></Stat>
						</StatusGroup>
						<StatusGroup $w={29}>
							<Stat w={29}>
								<Svg s={20}><path d="M12 1v22M1 12h22" stroke="#d8d8d8" strokeWidth="2.500" /></Svg>
							</Stat>
						</StatusGroup>
						<StatusGroup $w={31}>
							<Stat w={31}>
								<Svg s={24}><path d="M4 1h9v8H4z" fill="none" stroke="#ddd" /><circle cx="18" cy="12" r="4" fill="none" stroke="#ddd" /><path d="M9 14l5 8H4z" fill="none" stroke="#ddd" /></Svg>
							</Stat>
						</StatusGroup>
						<StatusGroup $w={68}>
							<Stat w={33}>
								<Svg s={26}><path d="M3 3h18v10H3z" fill="#3c6fb0" /><path d="M3 13h14v9H3z" fill="#f3b731" /><path d="M12 1v9M7 5h10" stroke="#fff" /><path d="M18 13l6 11H12z" fill="#f3c12a" /></Svg>
							</Stat>
							<Stat w={33}>
								<Svg s={24}><path d="M3 2h18v20H3z" fill="#8b8f96" /><path d="M3 16L10 5l7 11" stroke="#ddd" fill="none" /><path d="M17 11l6 12H11z" fill="#f0a37a" /></Svg>
							</Stat>
						</StatusGroup>
						<StatusGroup $w={58}>
							<Stat w={29}>
								<Svg s={20}><path d="M1 4h22v16H1z" fill="none" stroke="#bbb" /><path d="M5 17l4-4M15 11l4-4M5 13v4h4M15 7h4v4" stroke="#ddd" fill="none" /></Svg>
							</Stat>
							<Stat w={29}>
								<Svg s={22}><path d="M1 4h22M1 12h22M1 20h22" stroke="#eee" strokeWidth="2.500" /></Svg>
							</Stat>
						</StatusGroup>
					</StatusBar>
				</Cad>
			</Body>
			<Band />
		</Page>
	);
};

export default App;
